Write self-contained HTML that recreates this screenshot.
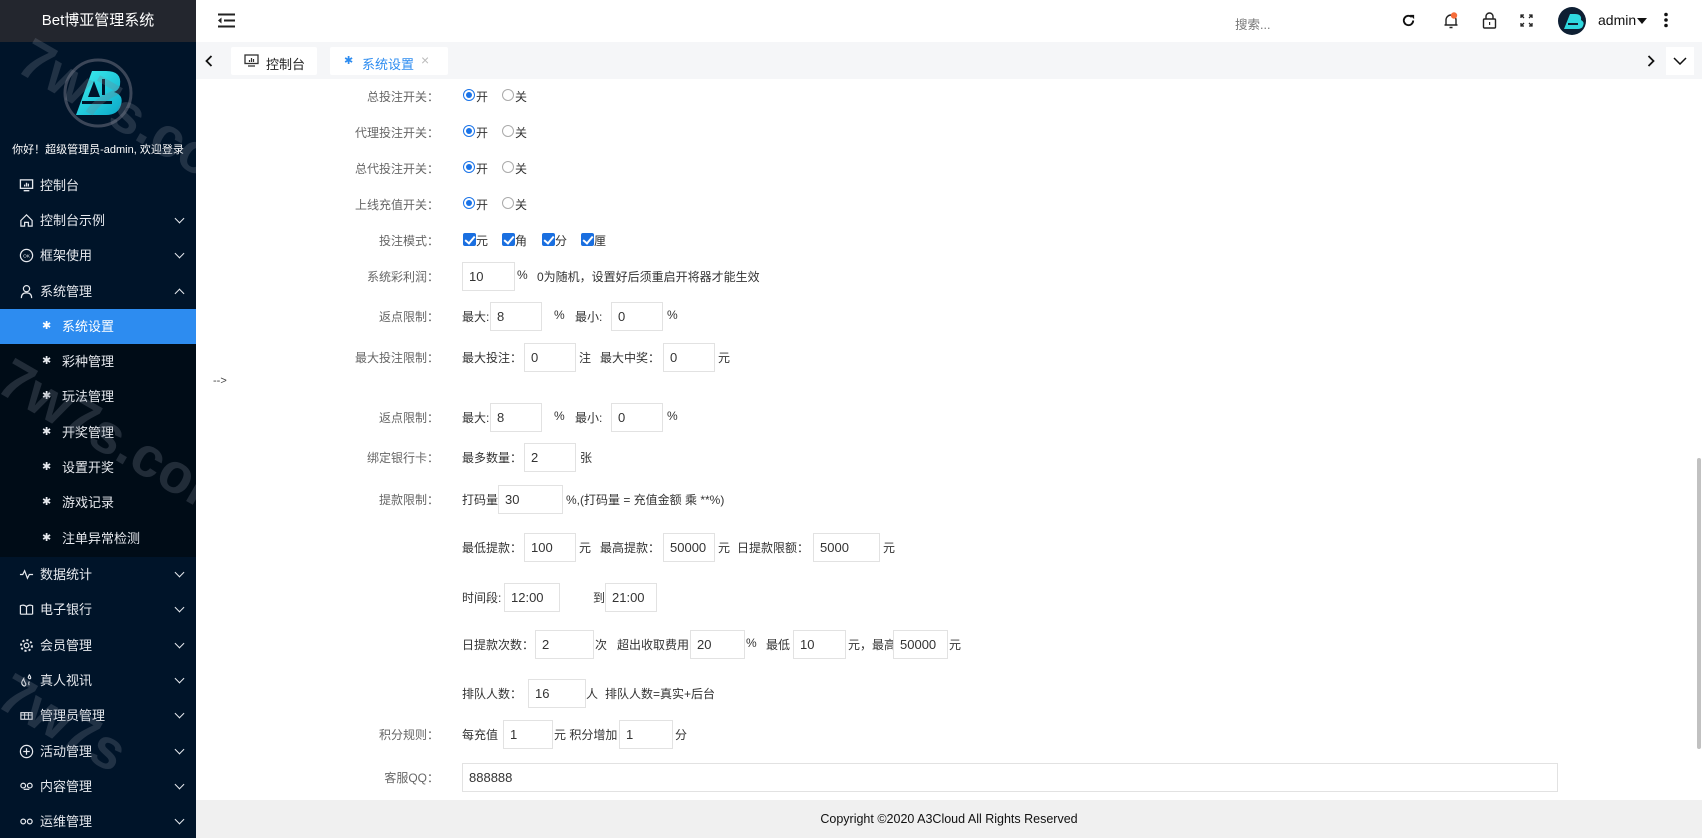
<!DOCTYPE html>
<html style="overflow:hidden"><head><meta charset="utf-8">
<style>
*{margin:0;padding:0;box-sizing:border-box}
html,body{width:1702px;height:838px;overflow:hidden}
body{position:relative;background:#fff;font-family:"Liberation Sans","Noto Sans CJK SC",sans-serif;font-size:12px;color:#333}
.a{position:absolute;white-space:nowrap}
#side{position:absolute;left:0;top:0;width:196px;height:838px;background:#001429;overflow:hidden}
#sidehead{position:absolute;left:0;top:0;width:196px;height:42px;background:#23262e;color:#fff;font-size:15px;text-align:center;line-height:42px}
.mi{position:absolute;left:0;width:196px;height:35px;line-height:35px;color:#e6e9ee;font-size:13px}
.mi .ic{position:absolute;left:19px;top:10px;width:15px;height:15px}
.mi .t{position:absolute;left:40px}
.mi .ch{position:absolute;left:176px;top:12px;width:7px;height:7px;border-right:1.6px solid #e6e9ee;border-bottom:1.6px solid #e6e9ee;transform:rotate(45deg)}
.mi .ch.up{transform:rotate(-135deg);top:16px}
.sub{position:absolute;left:0;top:309px;width:196px;height:248px;background:#000c17}
.si{position:absolute;left:0;width:196px;height:35px;line-height:35px;color:#e6e9ee;font-size:13px}
.si .t{position:absolute;left:62px}
.si .s{position:absolute;left:42px;top:0;font-size:11px}
.wm{position:absolute;font-size:56px;font-weight:bold;color:rgba(120,130,145,.28);transform:rotate(30deg);transform-origin:left top;font-family:"Liberation Sans",sans-serif}
.lab{position:absolute;color:#666;text-align:right;width:200px;left:239px}
.in{position:absolute;height:29px;border:1px solid #e2e2e2;background:#fff;padding-left:6px;line-height:27px;color:#333;font-size:13px}
.r{position:absolute;width:12px;height:12px;border-radius:50%;border:1px solid #aaa;background:#fff}
.r.on{border:1.5px solid #1a73e8}
.r.on:after{content:"";position:absolute;left:2px;top:2px;width:6px;height:6px;border-radius:50%;background:#1a73e8}
.cb{position:absolute;width:13px;height:13px;border-radius:2px;background:#1a6fe0}
.cb:after{content:"";position:absolute;left:4px;top:1px;width:4px;height:8px;border-right:2px solid #fff;border-bottom:2px solid #fff;transform:rotate(40deg)}
</style></head><body>

<div id="side">
 <div id="sidehead">Bet博亚管理系统</div>
 <svg class="a" style="left:62px;top:57px" width="72" height="72" viewBox="0 0 72 72">
  <circle cx="36" cy="36" r="33" fill="none" stroke="#3b4658" stroke-width="3"/>
  <defs><linearGradient id="g" x1="0" y1="0" x2="1" y2="1"><stop offset="0" stop-color="#3ff0f0"/><stop offset="1" stop-color="#0aa8c8"/></linearGradient></defs>
  <path d="M14 58 L30 14 L44 14 Q60 14 58 28 Q57 33 52 35 Q62 38 59 48 Q56 58 44 58 Z" fill="url(#g)"/>
  <path d="M26 40 L32 24 L38 40 Z" fill="#001429"/>
  <rect x="20" y="44" width="30" height="3" fill="#001429"/>
  <rect x="40" y="22" width="3" height="16" fill="#001429"/>
 </svg>
 <div class="a" style="left:0;width:196px;text-align:center;top:141px;color:#fff;font-size:11px">你好！超级管理员-admin, 欢迎登录</div>

 <div class="mi" style="top:168px"><svg class="ic" viewBox="0 0 16 16"><rect x="1.5" y="2" width="13" height="9" fill="none" stroke="#e6e9ee" stroke-width="1.4"/><path d="M5 13.5h6M6 9V7M8 9V5M10 9V6" stroke="#e6e9ee" stroke-width="1.4"/></svg><span class="t">控制台</span></div>
 <div class="mi" style="top:203px"><svg class="ic" viewBox="0 0 16 16"><path d="M2 8L8 2l6 6v6H10V10H6v4H2z" fill="none" stroke="#e6e9ee" stroke-width="1.3"/></svg><span class="t">控制台示例</span><span class="ch"></span></div>
 <div class="mi" style="top:238px"><svg class="ic" viewBox="0 0 16 16"><circle cx="8" cy="8" r="6.5" fill="none" stroke="#e6e9ee" stroke-width="1.3"/><text x="8" y="10" font-size="5" fill="#e6e9ee" text-anchor="middle" font-family="Liberation Sans">OK</text></svg><span class="t">框架使用</span><span class="ch"></span></div>
 <div class="mi" style="top:274px"><svg class="ic" viewBox="0 0 16 16"><circle cx="8" cy="5" r="3.3" fill="none" stroke="#e6e9ee" stroke-width="1.3"/><path d="M2.5 15c0-4 2.5-5.5 5.5-5.5s5.5 1.5 5.5 5.5" fill="none" stroke="#e6e9ee" stroke-width="1.3"/></svg><span class="t">系统管理</span><span class="ch up"></span></div>

 <div class="sub">
  <div class="si" style="top:0;background:#2d8cf0;color:#fff"><span class="s">✱</span><span class="t">系统设置</span></div>
  <div class="si" style="top:35px"><span class="s">✱</span><span class="t">彩种管理</span></div>
  <div class="si" style="top:70px"><span class="s">✱</span><span class="t">玩法管理</span></div>
  <div class="si" style="top:106px"><span class="s">✱</span><span class="t">开奖管理</span></div>
  <div class="si" style="top:141px"><span class="s">✱</span><span class="t">设置开奖</span></div>
  <div class="si" style="top:176px"><span class="s">✱</span><span class="t">游戏记录</span></div>
  <div class="si" style="top:212px"><span class="s">✱</span><span class="t">注单异常检测</span></div>
 </div>

 <div class="mi" style="top:557px"><svg class="ic" viewBox="0 0 16 16"><path d="M1 8h3l2-4 3 8 2-4h4" fill="none" stroke="#e6e9ee" stroke-width="1.3"/></svg><span class="t">数据统计</span><span class="ch"></span></div>
 <div class="mi" style="top:592px"><svg class="ic" viewBox="0 0 16 16"><path d="M1.5 13V4c2-1 4.5-1 6.5 1 2-2 4.5-2 6.5-1v9M8 5v8M1.5 13h13" fill="none" stroke="#e6e9ee" stroke-width="1.3"/></svg><span class="t">电子银行</span><span class="ch"></span></div>
 <div class="mi" style="top:628px"><svg class="ic" viewBox="0 0 16 16"><circle cx="8" cy="8" r="2.5" fill="none" stroke="#e6e9ee" stroke-width="1.3"/><circle cx="8" cy="8" r="5.8" fill="none" stroke="#e6e9ee" stroke-width="2" stroke-dasharray="2.3 2.2"/></svg><span class="t">会员管理</span><span class="ch"></span></div>
 <div class="mi" style="top:663px"><svg class="ic" viewBox="0 0 16 16"><path d="M5 6c-2 3-3 5-1 7s4 0 3-2-2-3-2-5zM11 2c-1 2-2 3 0 4s2-2 0-4zM11 9c-1 2-1 3 0 4" fill="none" stroke="#e6e9ee" stroke-width="1.2"/></svg><span class="t">真人视讯</span><span class="ch"></span></div>
 <div class="mi" style="top:698px"><svg class="ic" viewBox="0 0 16 16"><rect x="2" y="5" width="12" height="7" fill="none" stroke="#e6e9ee" stroke-width="1.2"/><path d="M2 7.5h12M6 5v7M10 5v7" stroke="#e6e9ee" stroke-width="1"/></svg><span class="t">管理员管理</span><span class="ch"></span></div>
 <div class="mi" style="top:734px"><svg class="ic" viewBox="0 0 16 16"><circle cx="8" cy="8" r="6.5" fill="none" stroke="#e6e9ee" stroke-width="1.3"/><path d="M8 4.5v7M4.5 8h7" stroke="#e6e9ee" stroke-width="1.3"/></svg><span class="t">活动管理</span><span class="ch"></span></div>
 <div class="mi" style="top:769px"><svg class="ic" viewBox="0 0 16 16"><circle cx="4.5" cy="7" r="2.5" fill="none" stroke="#e6e9ee" stroke-width="1.3"/><circle cx="11.5" cy="7" r="2.5" fill="none" stroke="#e6e9ee" stroke-width="1.3"/><path d="M5 11h6" stroke="#e6e9ee" stroke-width="1.3"/></svg><span class="t">内容管理</span><span class="ch"></span></div>
 <div class="mi" style="top:804px"><svg class="ic" viewBox="0 0 16 16"><circle cx="4.5" cy="8" r="2.5" fill="none" stroke="#e6e9ee" stroke-width="1.3"/><circle cx="11.5" cy="8" r="2.5" fill="none" stroke="#e6e9ee" stroke-width="1.3"/></svg><span class="t">运维管理</span><span class="ch"></span></div>

 <div class="wm" style="left:40px;top:25px">7w7s.com</div>
 <div class="wm" style="left:20px;top:345px">7w7s.com</div>
 <div class="wm" style="left:20px;top:660px">7w7s</div>
</div>

<!-- header -->
<svg class="a" style="left:218px;top:13px" width="17" height="15" viewBox="0 0 17 15"><path d="M0 1.5h17M6 7.5h11M0 13.5h17" stroke="#222" stroke-width="2"/><path d="M0 7.5l3.5-3v6z" fill="#222"/></svg>
<div class="a" style="left:1235px;top:14px;color:#777;font-size:12.5px">搜索...</div>
<svg class="a" style="left:1401px;top:13px" width="15" height="15" viewBox="0 0 16 16"><path d="M13 8A5 5 0 1 1 11.5 4.4" fill="none" stroke="#111" stroke-width="2"/><path d="M9.5 2h4.5v4.5z" fill="#111"/></svg>
<svg class="a" style="left:1443px;top:12px" width="16" height="17" viewBox="0 0 16 17"><path d="M3 13V8a5 5 0 0 1 10 0v5zM1.5 13h13M6.5 15.5h3" fill="none" stroke="#222" stroke-width="1.4"/><circle cx="11" cy="3.5" r="3.2" fill="#f56c3a"/></svg>
<svg class="a" style="left:1482px;top:12px" width="15" height="17" viewBox="0 0 15 17"><rect x="1.5" y="7" width="12" height="9" rx="1" fill="none" stroke="#222" stroke-width="1.4"/><path d="M4 7V4.5a3.5 3.5 0 0 1 7 0V7" fill="none" stroke="#222" stroke-width="1.4"/><rect x="7" y="10" width="1.2" height="3" fill="#222"/></svg>
<svg class="a" style="left:1520px;top:14px" width="13" height="13" viewBox="0 0 13 13"><path d="M1 4V1h3M9 1h3v3M12 9v3H9M4 12H1V9M1 1l3 3M12 1L9 4M12 12L9 9M1 12l3-3" fill="none" stroke="#222" stroke-width="1.3"/></svg>
<svg class="a" style="left:1558px;top:7px" width="28" height="28" viewBox="0 0 28 28"><circle cx="14" cy="14" r="14" fill="#0e1f33"/><path d="M6 22L12 7h5q7 0 6 6q4 2 2 6q-1 3-6 3z" fill="#2fd9e0"/><path d="M10 16h10v2H10z" fill="#0e1f33"/></svg>
<div class="a" style="left:1598px;top:12px;font-size:14px;color:#111">admin</div>
<div class="a" style="left:1637px;top:18px;width:0;height:0;border-left:5.5px solid transparent;border-right:5.5px solid transparent;border-top:6px solid #111"></div>
<svg class="a" style="left:1664px;top:12px" width="4" height="16" viewBox="0 0 4 16"><circle cx="2" cy="2.5" r="1.8" fill="#111"/><circle cx="2" cy="8" r="1.8" fill="#111"/><circle cx="2" cy="13.5" r="1.8" fill="#111"/></svg>

<!-- tabs -->
<div class="a" style="left:196px;top:42px;width:1506px;height:37px;background:#f5f6f8"></div>
<svg class="a" style="left:205px;top:55px" width="8" height="12" viewBox="0 0 8 12"><path d="M6.5 1L1.5 6l5 5" fill="none" stroke="#111" stroke-width="1.8"/></svg>
<div class="a" style="left:231px;top:47px;width:86px;height:28px;background:#fff;border-radius:2px"></div>
<svg class="a" style="left:244px;top:54px" width="15" height="13" viewBox="0 0 15 13"><rect x="1" y="1" width="13" height="8.5" fill="none" stroke="#333" stroke-width="1.3"/><path d="M4 12h7M5.5 8V6M7.5 8V4M9.5 8V5" stroke="#333" stroke-width="1.2"/></svg>
<div class="a" style="left:266px;top:54px;font-size:13px;color:#222">控制台</div>
<div class="a" style="left:330px;top:47px;width:118px;height:28px;background:#fff;border-radius:2px"></div>
<div class="a" style="left:344px;top:54px;font-size:11px;color:#2d8cf0">✱</div>
<div class="a" style="left:362px;top:54px;font-size:13px;color:#2d8cf0">系统设置</div>
<div class="a" style="left:421px;top:52px;font-size:14px;color:#bbb">×</div>
<svg class="a" style="left:1647px;top:55px" width="8" height="12" viewBox="0 0 8 12"><path d="M1.5 1l5 5-5 5" fill="none" stroke="#111" stroke-width="1.8"/></svg>
<div class="a" style="left:1666px;top:47px;width:28px;height:28px;background:#fff"></div>
<svg class="a" style="left:1673px;top:57px" width="14" height="8" viewBox="0 0 14 8"><path d="M1 1l6 6 6-6" fill="none" stroke="#111" stroke-width="1.5"/></svg>

<!-- scrollbar -->
<div class="a" style="left:1697px;top:458px;width:4px;height:291px;background:#c1c1c1;border-radius:2px"></div>

<!-- form -->
<div class="lab" style="top:88px">总投注开关：</div>
<div class="r on" style="left:463px;top:89px"></div><div class="a" style="left:476px;top:88px">开</div>
<div class="r" style="left:502px;top:89px"></div><div class="a" style="left:515px;top:88px">关</div>
<div class="lab" style="top:124px">代理投注开关：</div>
<div class="r on" style="left:463px;top:125px"></div><div class="a" style="left:476px;top:124px">开</div>
<div class="r" style="left:502px;top:125px"></div><div class="a" style="left:515px;top:124px">关</div>
<div class="lab" style="top:160px">总代投注开关：</div>
<div class="r on" style="left:463px;top:161px"></div><div class="a" style="left:476px;top:160px">开</div>
<div class="r" style="left:502px;top:161px"></div><div class="a" style="left:515px;top:160px">关</div>
<div class="lab" style="top:196px">上线充值开关：</div>
<div class="r on" style="left:463px;top:197px"></div><div class="a" style="left:476px;top:196px">开</div>
<div class="r" style="left:502px;top:197px"></div><div class="a" style="left:515px;top:196px">关</div>
<div class="lab" style="top:232px">投注模式：</div>
<div class="cb" style="left:463px;top:233px"></div><div class="a" style="left:476px;top:232px">元</div>
<div class="cb" style="left:502px;top:233px"></div><div class="a" style="left:515px;top:232px">角</div>
<div class="cb" style="left:542px;top:233px"></div><div class="a" style="left:555px;top:232px">分</div>
<div class="cb" style="left:581px;top:233px"></div><div class="a" style="left:594px;top:232px">厘</div>

<div class="lab" style="top:268px">系统彩利润：</div>
<div class="in" style="left:462px;top:262px;width:53px">10</div>
<div class="a" style="left:517px;top:268px">%</div>
<div class="a" style="left:537px;top:268px">0为随机，设置好后须重启开将器才能生效</div>

<div class="lab" style="top:308px">返点限制：</div>
<div class="a" style="left:462px;top:308px">最大:</div>
<div class="in" style="left:490px;top:302px;width:52px">8</div>
<div class="a" style="left:554px;top:308px">%</div>
<div class="a" style="left:575px;top:308px">最小:</div>
<div class="in" style="left:611px;top:302px;width:52px">0</div>
<div class="a" style="left:667px;top:308px">%</div>

<div class="lab" style="top:349px">最大投注限制：</div>
<div class="a" style="left:462px;top:349px">最大投注：</div>
<div class="in" style="left:524px;top:343px;width:52px">0</div>
<div class="a" style="left:579px;top:349px">注</div>
<div class="a" style="left:600px;top:349px">最大中奖：</div>
<div class="in" style="left:663px;top:343px;width:52px">0</div>
<div class="a" style="left:718px;top:349px">元</div>

<div class="a" style="left:213px;top:375px;font-size:11px;color:#444">--&gt;</div>

<div class="lab" style="top:409px">返点限制：</div>
<div class="a" style="left:462px;top:409px">最大:</div>
<div class="in" style="left:490px;top:403px;width:52px">8</div>
<div class="a" style="left:554px;top:409px">%</div>
<div class="a" style="left:575px;top:409px">最小:</div>
<div class="in" style="left:611px;top:403px;width:52px">0</div>
<div class="a" style="left:667px;top:409px">%</div>

<div class="lab" style="top:449px">绑定银行卡：</div>
<div class="a" style="left:462px;top:449px">最多数量：</div>
<div class="in" style="left:524px;top:443px;width:52px">2</div>
<div class="a" style="left:580px;top:449px">张</div>

<div class="lab" style="top:491px">提款限制：</div>
<div class="a" style="left:462px;top:491px">打码量:</div>
<div class="in" style="left:498px;top:485px;width:65px">30</div>
<div class="a" style="left:566px;top:491px">%,(打码量 = 充值金额 乘 **%)</div>

<div class="a" style="left:462px;top:539px">最低提款：</div>
<div class="in" style="left:524px;top:533px;width:52px">100</div>
<div class="a" style="left:579px;top:539px">元</div>
<div class="a" style="left:600px;top:539px">最高提款：</div>
<div class="in" style="left:663px;top:533px;width:52px">50000</div>
<div class="a" style="left:718px;top:539px">元</div>
<div class="a" style="left:737px;top:539px">日提款限额：</div>
<div class="in" style="left:813px;top:533px;width:67px">5000</div>
<div class="a" style="left:883px;top:539px">元</div>

<div class="a" style="left:462px;top:589px">时间段: 从</div>
<div class="in" style="left:504px;top:583px;width:56px">12:00</div>
<div class="a" style="left:593px;top:589px">到</div>
<div class="in" style="left:605px;top:583px;width:52px">21:00</div>

<div class="a" style="left:462px;top:636px">日提款次数：</div>
<div class="in" style="left:535px;top:630px;width:59px">2</div>
<div class="a" style="left:595px;top:636px">次</div>
<div class="a" style="left:617px;top:636px">超出收取费用</div>
<div class="in" style="left:690px;top:630px;width:55px">20</div>
<div class="a" style="left:746px;top:636px">%</div>
<div class="a" style="left:766px;top:636px">最低</div>
<div class="in" style="left:793px;top:630px;width:53px">10</div>
<div class="a" style="left:848px;top:636px">元，最高</div>
<div class="in" style="left:893px;top:630px;width:55px">50000</div>
<div class="a" style="left:949px;top:636px">元</div>

<div class="a" style="left:462px;top:685px">排队人数：</div>
<div class="in" style="left:528px;top:679px;width:58px">16</div>
<div class="a" style="left:586px;top:685px">人</div>
<div class="a" style="left:605px;top:685px">排队人数=真实+后台</div>

<div class="lab" style="top:726px">积分规则：</div>
<div class="a" style="left:462px;top:726px">每充值</div>
<div class="in" style="left:503px;top:720px;width:50px">1</div>
<div class="a" style="left:554px;top:726px">元 积分增加</div>
<div class="in" style="left:619px;top:720px;width:54px">1</div>
<div class="a" style="left:675px;top:726px">分</div>

<div class="lab" style="top:769px">客服QQ：</div>
<div class="in" style="left:462px;top:763px;width:1096px">888888</div>

<!-- footer -->
<div class="a" style="left:196px;top:800px;width:1506px;height:38px;background:#f0f0f0;text-align:center;line-height:38px;font-size:12.5px;color:#111">Copyright ©2020 A3Cloud All Rights Reserved</div>
</body></html>
